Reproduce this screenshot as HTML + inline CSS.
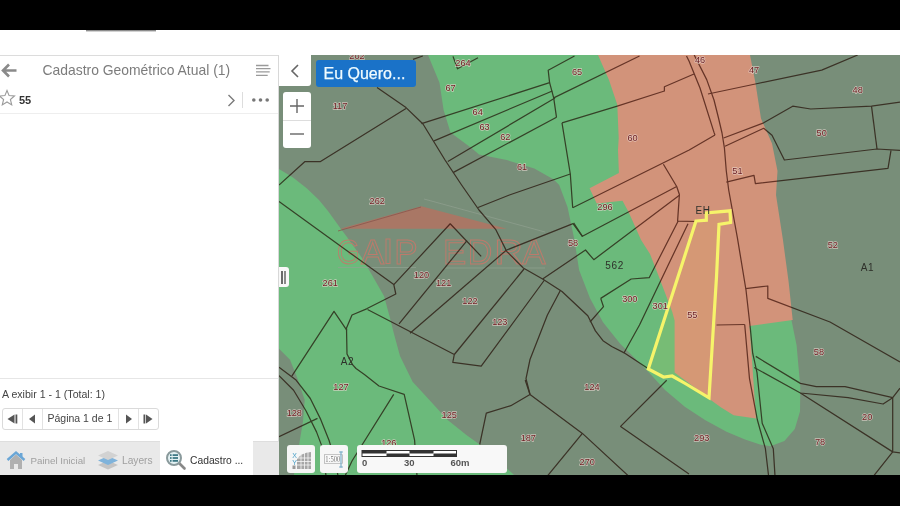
<!DOCTYPE html>
<html><head><meta charset="utf-8">
<style>
*{box-sizing:border-box;margin:0;padding:0}
html,body{width:900px;height:506px;overflow:hidden;background:#000;font-family:"Liberation Sans",sans-serif}
.abs{position:absolute}
#top{left:0;top:0;width:900px;height:30px;background:#000}
#bot{left:0;top:475px;width:900px;height:31px;background:#000}
#white{left:0;top:30px;width:900px;height:445px;background:#fff}
#panel{left:0;top:55px;width:279px;height:420px;background:#fff;border-top:1px solid #dcdcdc;border-right:1px solid #d8d8d8}
#map{left:279px;top:55px;width:621px;height:420px;overflow:hidden}
.btn{background:#fff;border-radius:3px}
</style></head><body>
<div id="top" class="abs"></div>
<div id="white" class="abs"></div>
<div class="abs" style="left:86px;top:30px;width:70px;height:2px;background:linear-gradient(#6a6a6a,#f4f4f4)"></div>
<div id="panel" class="abs"></div>
<!-- header -->
<svg class="abs" style="left:1px;top:63px" width="16" height="15" viewBox="0 0 16 15"><path d="M8 1.5 L2 7.5 L8 13.5 M2.5 7.5 H15.5" fill="none" stroke="#8a8a8a" stroke-width="2.6"/></svg>
<div class="abs" style="left:42.5px;top:62px;font-size:13.9px;color:#7c7c7c;white-space:nowrap">Cadastro Geométrico Atual (1)</div>
<svg class="abs" style="left:255px;top:64px" width="17" height="13" viewBox="0 0 17 13"><g stroke="#9a9a9a" stroke-width="1.3"><path d="M1 1.5H13.5M1 4.7H15.5M1 7.9H14.7M1 11.3H12.7"/></g></svg>
<div class="abs" style="left:0;top:113px;width:278px;height:1px;background:#eee"></div>
<svg class="abs" style="left:-2px;top:89px" width="18" height="18" viewBox="0 0 18 18"><path d="M9 1.5 L11.1 6.6 L16.5 7 L12.4 10.5 L13.7 15.9 L9 13 L4.3 15.9 L5.6 10.5 L1.5 7 L6.9 6.6 Z" fill="none" stroke="#9a9a9a" stroke-width="1.1"/></svg>
<div class="abs" style="left:19px;top:94px;font-size:11px;font-weight:bold;color:#333">55</div>
<svg class="abs" style="left:226px;top:93px" width="10" height="15" viewBox="0 0 10 15"><path d="M2.5 2 L8 7.5 L2.5 13" fill="none" stroke="#7a7a7a" stroke-width="1.4"/></svg>
<div class="abs" style="left:241.5px;top:92px;width:1px;height:16px;background:#ddd"></div>
<svg class="abs" style="left:251px;top:97px" width="19" height="6" viewBox="0 0 19 6"><g fill="#777"><circle cx="2.8" cy="3" r="1.8"/><circle cx="9.5" cy="3" r="1.8"/><circle cx="16.2" cy="3" r="1.8"/></g></svg>
<!-- footer -->
<div class="abs" style="left:0;top:378px;width:278px;height:1px;background:#e6e6e6"></div>
<div class="abs" style="left:2px;top:388px;font-size:10.6px;color:#444;white-space:nowrap">A exibir 1 - 1 (Total: 1)</div>
<div class="abs" style="left:2px;top:408px;width:157px;height:22px;border:1px solid #dadada;border-radius:3px;background:#fff"></div>
<div class="abs" style="left:22px;top:409px;width:1px;height:20px;background:#e2e2e2"></div>
<div class="abs" style="left:42px;top:409px;width:1px;height:20px;background:#e2e2e2"></div>
<div class="abs" style="left:118px;top:409px;width:1px;height:20px;background:#e2e2e2"></div>
<div class="abs" style="left:138px;top:409px;width:1px;height:20px;background:#e2e2e2"></div>
<svg class="abs" style="left:0;top:408px" width="160" height="22" viewBox="0 0 160 22"><g fill="#555">
<path d="M7.5 11 L14.5 6.5 V15.5 Z"/><rect x="15.5" y="6.5" width="1.8" height="9"/>
<path d="M29 11 L35 6.5 V15.5 Z"/>
<path d="M132 11 L126 6.5 V15.5 Z"/>
<rect x="143.5" y="6.5" width="1.8" height="9"/><path d="M152.5 11 L146 6.5 V15.5 Z"/>
</g></svg>
<div class="abs" style="left:47.5px;top:412px;font-size:10.5px;color:#444;white-space:nowrap">Página 1 de 1</div>
<!-- tabs -->
<div class="abs" style="left:0;top:441px;width:279px;height:34px;background:#e9e9e9;border-top:1px solid #dedede"></div>
<div class="abs" style="left:160px;top:441px;width:93px;height:34px;background:#fff"></div>
<svg class="abs" style="left:6px;top:450px" width="20" height="20" viewBox="0 0 20 20">
<path d="M4 10 V19 H8 V14 H12 V19 H16 V10 L10 4.5 Z" fill="#b0b0b0"/>
<path d="M1.5 10 L10 2.5 L18.5 10" fill="none" stroke="#6aa6d6" stroke-width="2.4"/><rect x="14" y="3" width="2.5" height="4" fill="#6aa6d6"/></svg>
<div class="abs" style="left:30.5px;top:455px;font-size:9.75px;color:#a0a0a0;white-space:nowrap">Painel Inicial</div>
<svg class="abs" style="left:97px;top:450px" width="22" height="20" viewBox="0 0 22 20">
<path d="M11 10.5 L21 15 L11 19.5 L1 15 Z" fill="#c4c4c4"/>
<path d="M11 6 L21 10.5 L11 15 L1 10.5 Z" fill="#7fb3db"/>
<path d="M11 1 L21 5.5 L11 10 L1 5.5 Z" fill="#d2d2d2"/></svg>
<div class="abs" style="left:122px;top:455px;font-size:10.2px;color:#a0a0a0;white-space:nowrap">Layers</div>
<svg class="abs" style="left:165px;top:449px" width="22" height="22" viewBox="0 0 22 22">
<line x1="13.5" y1="13.5" x2="19.5" y2="19.5" stroke="#888" stroke-width="2.6" stroke-linecap="round"/>
<circle cx="9" cy="9" r="7" fill="#e4f2f4" stroke="#8a9a9c" stroke-width="2"/>
<g fill="#2b6b78"><rect x="5" y="5.3" width="1.6" height="1.6"/><rect x="7.6" y="5.3" width="5.4" height="1.6"/><rect x="5" y="8.2" width="1.6" height="1.6"/><rect x="7.6" y="8.2" width="5.4" height="1.6"/><rect x="5" y="11.1" width="1.6" height="1.6"/><rect x="7.6" y="11.1" width="5.4" height="1.6"/></g></svg>
<div class="abs" style="left:190px;top:455px;font-size:10.3px;color:#333;white-space:nowrap">Cadastro ...</div>
<div id="map" class="abs"><svg width="621" height="421" viewBox="279 55 621 421">
<rect x="279" y="55" width="621" height="421" fill="#788e79"/>
<polygon points="279,169 293,177.5 307,188.5 319,200 328,211 341,229 347,237 362,258 372,275 384,296 390,318 394,334 400,356 412.6,381.8 428.5,399 447.4,419.8 466.4,435 479.7,444.5 512,473 515,476 279,476" fill="#6bba7b"/>
<polygon points="279,348.7 290,359.7 297.3,378 304.7,400 302.9,422 299.2,444 293.7,476 279,476" fill="#788e79"/>
<polygon points="428,55 439.5,82.7 443.6,110 450.5,132.5 472.7,149 479,154.6 506.7,160 534.3,168.4 553.7,179.5 559.2,185 567.5,207 574.5,240.3 579.1,270 590,298.3 603,322.2 620.4,343.9 635.7,359.1 648.7,372.2 665,390 684.8,406.7 705,420 726.5,431.7 745,439.5 760,444.5 770.4,446.3 784.4,441 794.8,428.9 800,411.5 800.3,387 796.6,345.3 791.3,319.2 770,200 700,55" fill="#6bba7b"/>
<polygon points="598,55 750,55 755.4,82.7 761,118.6 772,143.5 777.5,171 776,195 783,240.3 788.6,281.8 792.7,320 749.5,326 752,360 756,418.4 733.6,415.3 720.8,407.3 709.7,399.3 698,390 674.6,372.6 674.6,320.4 672.2,311.7 659,277 650,254 641.1,240 628.7,212.2 622.5,200.7 596.7,203.4 589.6,188.2 618.9,173.1 618,150 618.7,138 617.3,104.8 609,80" fill="#d2937a"/>
<polygon points="696,221 706.3,220.2 706.3,213 730,210.8 730.6,222.5 719,224.3 716.5,277 713.5,324.8 709,397.8 685.2,383.5 672.2,376 663.5,377 648.3,369" fill="#f0d040" fill-opacity="0.09"/>
<g opacity="0.9">
<polygon points="340,228.8 421.3,206.2 506.7,228.8" fill="#b8705f" fill-opacity="0.85"/>
<polyline points="338,231 421,207" fill="none" stroke="#8a5048" stroke-width="0.8"/>
<polyline points="424,199 545,232" fill="none" stroke="#8fa08f" stroke-width="0.8"/>
<line x1="338" y1="267.5" x2="416" y2="267.5" stroke="#90a290" stroke-width="0.8"/>
<line x1="444" y1="268" x2="545" y2="268" stroke="#90a290" stroke-width="0.8"/>
<text x="337" y="263.5" font-family="Liberation Sans" font-size="35" textLength="22.69999999999999" lengthAdjust="spacingAndGlyphs" fill="none" stroke="#c4786a" stroke-width="1">G</text>
<text x="361" y="263.5" font-family="Liberation Sans" font-size="35" textLength="23.30000000000001" lengthAdjust="spacingAndGlyphs" fill="none" stroke="#c4786a" stroke-width="1">A</text>
<rect x="386" y="239" width="4" height="24.5" fill="none" stroke="#c4786a" stroke-width="1"/>
<text x="394.3" y="263.5" font-family="Liberation Sans" font-size="35" textLength="23.399999999999977" lengthAdjust="spacingAndGlyphs" fill="none" stroke="#c4786a" stroke-width="1">P</text>
<text x="443" y="263.5" font-family="Liberation Sans" font-size="35" textLength="23.30000000000001" lengthAdjust="spacingAndGlyphs" fill="none" stroke="#c4786a" stroke-width="1">E</text>
<text x="467.7" y="263.5" font-family="Liberation Sans" font-size="35" textLength="24.600000000000023" lengthAdjust="spacingAndGlyphs" fill="none" stroke="#c4786a" stroke-width="1">D</text>
<text x="494.3" y="263.5" font-family="Liberation Sans" font-size="35" textLength="28.69999999999999" lengthAdjust="spacingAndGlyphs" fill="none" stroke="#c4786a" stroke-width="1">R</text>
<text x="522.3" y="263.5" font-family="Liberation Sans" font-size="35" textLength="23.40000000000009" lengthAdjust="spacingAndGlyphs" fill="none" stroke="#c4786a" stroke-width="1">A</text>
</g>
<g fill="none" stroke="#7c5a50" stroke-width="1.25" stroke-linejoin="round" style="mix-blend-mode:multiply">
<polyline points="377,87.6 406,107.6 423,124 445,160 461.6,185 479,210 495.6,229.3 506.7,251.4 523.3,268 542.6,279 562,291.5 587.8,315.7 591.1,322.2 595.4,330.9 603,340.7 611.7,346.5 623.7,352.6 648,368.5"/>
<polyline points="279,185 305,161.5 320.5,161.5 406,108.5"/>
<polyline points="413,59.4 422.8,56"/>
<polyline points="421.5,123.6 549.6,82.7"/>
<polyline points="434,140.8 552.3,91"/>
<polyline points="447.8,161.5 555,98"/>
<polyline points="453,172.6 556.5,117.3"/>
<polyline points="574.5,56 548.2,70.2 549.6,82.7 553.7,97.9 556.5,117.3"/>
<polyline points="553.7,97.9 639.5,56"/>
<polyline points="562,122.8 617.3,106.2 664.4,91 664.4,86.8 694,74"/>
<polyline points="562,122.8 570.3,174 572.7,207.8"/>
<polyline points="572.7,207.8 689.2,150 715,135"/>
<polyline points="478,207.5 509.4,195 570.3,174"/>
<polyline points="663.4,164.2 676.7,186.5 679.4,194.5 677.6,221.1 697,221.5"/>
<polyline points="506.7,250 573,223.7 582.4,236.3 676.7,186.5"/>
<polyline points="573.6,222.9 582.4,236.3"/>
<polyline points="542.6,279 585.5,250 593.8,259.7 679.4,195.3"/>
<polyline points="600.7,298.4 631.2,279 649.2,277.7 678.2,221"/>
<polyline points="600.7,298.4 603.5,306.7 590,322"/>
<polyline points="688,223.7 639.5,325 623.8,353.2"/>
<polyline points="686.5,56 689,61 700,88 714,132.4 715,135"/>
<polyline points="694.2,55 706.7,79.6 714,100 718.5,118 722,133 724.4,147.8 726.3,171 728.7,190 737.4,237.8 746,290 750.4,329 752.7,353.2 757,372.6 762.2,423.2 773.3,448.7 775,476"/>
<polyline points="744.7,324.5 749.5,378.7 757.4,420 765.4,448.7 768.6,476"/>
<polyline points="708,94 755.4,84 821.7,70.2 857.7,55"/>
<polyline points="723.6,138 763.7,122.8 792.7,106.2 810.7,109 871.5,106.2 900,102"/>
<polyline points="725,146.3 763.7,128.3 772,135.2 784.4,160 877,149 900,150.4"/>
<polyline points="871.5,106.2 877,149"/>
<polyline points="891,150.4 888,168.4 755.4,183.6 754,175.3 726.3,182.2"/>
<polyline points="745.7,288.7 767.8,286 767.8,298.4 830,322 900,362"/>
<polyline points="716.5,325 744.7,324.5"/>
<polyline points="755.8,356.4 800.4,383.4 816.3,386.6 845,386.6 892.7,397.7 900,388.2"/>
<polyline points="754.2,367.5 800.4,393 848.1,397.7 883.1,404 892.7,397.7"/>
<polyline points="800.4,393 892.7,451.9 900,453"/>
<polyline points="892.7,397.7 892.7,451.9 873.6,476"/>
<polyline points="279,201.6 393.8,284.6 395.8,294 366.6,308.8 352,315 346.5,328 347,354 352.5,364.6 356,368.5 364.4,374.6 379,386 404.2,394.3 414.6,440.2 417,476"/>
<polyline points="393.8,284.6 450.2,223.8 481.2,256.4"/>
<polyline points="399,323.8 467,240.6"/>
<polyline points="410,333.3 506.5,250"/>
<polyline points="367.5,309.5 454.3,354.5 452.8,362.4 481.2,366.2 544.5,280"/>
<polyline points="454.3,354.5 524,269"/>
<polyline points="291.8,376.2 334,311.3 346.9,330.4"/>
<polyline points="393.7,394.3 352,461 345,476"/>
<polyline points="279,367.2 295.7,379.7 310.3,398.5 320.7,419.4 329,440.3 335.3,461 338,476"/>
<polyline points="279,375.6 293.6,390.2 306.1,411 316.5,431.9 322.8,448.6 326,476"/>
<polyline points="279,436.8 317.5,418.4"/>
<polyline points="560.6,290 547.4,315 530,359.5 526,378.6 530,394.5 582.4,433.4 628.5,476"/>
<polyline points="530,394.5 525.2,380"/>
<polyline points="530,394.5 510.8,405.7 486.3,413.2 479.7,444.5"/>
<polyline points="582.4,433.4 547.4,476"/>
<polyline points="666.7,380.2 620.6,426.4 689,474"/>
<polyline points="453,56.4 457.5,68.8 478,57.8"/>
</g>
<polygon points="696,221 706.3,220.2 706.3,213 730,210.8 730.6,222.5 719,224.3 716.5,277 713.5,324.8 709,397.8 685.2,383.5 672.2,376 663.5,377 648.3,369" fill="none" stroke="#f6f46a" stroke-width="3.2" stroke-linejoin="miter"/>
<g font-family="Liberation Sans" font-size="9.2" text-anchor="middle" fill="#6e2024" stroke="#ecdcd4" stroke-width="1.3" paint-order="stroke" stroke-opacity="0.7">
<text x="357" y="59.0">202</text>
<text x="340" y="109.3">117</text>
<text x="463" y="66.3">264</text>
<text x="450.5" y="90.89999999999999">67</text>
<text x="477.7" y="115.0">64</text>
<text x="484.5" y="129.70000000000002">63</text>
<text x="505.3" y="139.9">62</text>
<text x="577" y="74.89999999999999">65</text>
<text x="632.6" y="140.8">60</text>
<text x="522" y="170.3">61</text>
<text x="754" y="72.7">47</text>
<text x="857.7" y="92.89999999999999">48</text>
<text x="821.7" y="135.70000000000002">50</text>
<text x="737.4" y="173.9">51</text>
<text x="700" y="63.3">46</text>
<text x="377.2" y="203.5">262</text>
<text x="330.2" y="285.7">261</text>
<text x="421.5" y="278.3">120</text>
<text x="443.6" y="285.7">121</text>
<text x="470" y="304.0">122</text>
<text x="605" y="210.3">296</text>
<text x="573" y="246.3">58</text>
<text x="629.8" y="301.7">300</text>
<text x="660.2" y="308.7">301</text>
<text x="499.8" y="325.3">123</text>
<text x="832.8" y="247.8">52</text>
<text x="692.3" y="318.3">55</text>
<text x="341" y="389.90000000000003">127</text>
<text x="294.3" y="416.0">128</text>
<text x="449.2" y="417.90000000000003">125</text>
<text x="388.8" y="445.6">126</text>
<text x="592" y="389.90000000000003">124</text>
<text x="528.3" y="440.8">187</text>
<text x="587.2" y="465.3">270</text>
<text x="818.9" y="354.90000000000003">58</text>
<text x="867.2" y="420.1">20</text>
<text x="701.7" y="440.8">293</text>
<text x="820" y="444.7">78</text>
</g>
<g font-family="Liberation Sans" font-size="10" text-anchor="middle" fill="#2e302a" letter-spacing="0.6">
<text x="614.6" y="268.9">562</text>
<text x="867.4" y="271.09999999999997">A1</text>
<text x="703" y="213.89999999999998">EH</text>
<text x="347.4" y="364.7">A2</text>
</g></svg></div>
<!-- map controls -->
<div class="abs" style="left:279px;top:55px;width:32px;height:31px;background:#fff;border-radius:0 0 3px 0"></div>
<svg class="abs" style="left:288px;top:63px" width="14" height="16" viewBox="0 0 14 16"><path d="M10 2 L4 8 L10 14" fill="none" stroke="#666" stroke-width="1.6"/></svg>
<div class="abs" style="left:316px;top:60px;width:100px;height:27px;background:#1a72c8;border-radius:3px"></div>
<div class="abs" style="left:323.5px;top:64.5px;font-size:16px;color:#f0fbff;-webkit-text-stroke:0.25px #f0fbff;white-space:nowrap">Eu Quero...</div>
<div class="abs" style="left:283px;top:92px;width:28px;height:56px;background:#fff;border-radius:3px"></div>
<div class="abs" style="left:283px;top:120px;width:28px;height:1px;background:#ddd"></div>
<svg class="abs" style="left:283px;top:92px" width="28" height="56" viewBox="0 0 28 56"><g stroke="#666" stroke-width="1.4"><path d="M7 14 H21 M14 7 V21"/><path d="M7 42 H21"/></g></svg>
<div class="abs" style="left:279px;top:267px;width:10px;height:20px;background:#f8f8f8;border-radius:0 3px 3px 0"></div>
<div class="abs" style="left:281px;top:271px;width:1.6px;height:13px;background:#6a6a6a"></div><div class="abs" style="left:283.6px;top:271px;width:2.2px;height:13px;background:#8a8a8a"></div>
<div class="abs btn" style="left:287px;top:445px;width:28px;height:28px;background:#f6f6f6"></div>
<svg class="abs" style="left:291px;top:449px" width="22" height="22" viewBox="0 0 22 22">
<path d="M6 20 V10 Q10 4 20 3 V20 Z" fill="#a6a6a6"/>
<g stroke="#f6f6f6" stroke-width="0.8"><path d="M6 9H20M6 12.5H20M6 16H20M10 4V20M13.5 3V20M17 3V20"/></g>
<text x="3.5" y="9" font-family="Liberation Sans" font-size="7" fill="#4aa0c8" text-anchor="middle">X</text>
<text x="3.5" y="16" font-family="Liberation Sans" font-size="7" fill="#4aa0c8" text-anchor="middle">Y</text>
<rect x="1.5" y="16.5" width="3" height="3.5" fill="#999"/></svg>
<div class="abs btn" style="left:320px;top:445px;width:28px;height:28px;background:#f6f6f6"></div>
<svg class="abs" style="left:320px;top:445px" width="28" height="28" viewBox="0 0 28 28">
<rect x="4.5" y="9.7" width="18" height="8.6" fill="#fafafa" stroke="#aaa" stroke-width="0.7"/>
<text x="12.8" y="16.8" font-family="Liberation Serif" font-size="8.2" fill="#777" text-anchor="middle" textLength="15" lengthAdjust="spacingAndGlyphs">1:500</text>
<path d="M19.3 7 H22.7 M21 7 V22 M19.3 22 H22.7" stroke="#86b4cc" stroke-width="1.3" fill="none"/></svg>
<div class="abs btn" style="left:357px;top:445px;width:150px;height:28px;background:#f8f8f8"></div>
<svg class="abs" style="left:357px;top:445px" width="150" height="28" viewBox="0 0 150 28">
<rect x="5" y="5.5" width="94.5" height="6" fill="#fff" stroke="#333" stroke-width="1"/>
<rect x="5" y="5.5" width="24.5" height="3" fill="#333"/><rect x="29.5" y="8.5" width="23" height="3" fill="#333"/>
<rect x="52.5" y="5.5" width="24" height="3" fill="#333"/><rect x="76.5" y="8.5" width="23" height="3" fill="#333"/>
<g font-family="Liberation Sans" font-size="9.5" font-weight="bold" fill="#555"><text x="5" y="21">0</text><text x="47" y="21">30</text><text x="93.5" y="21">60m</text></g></svg>
<div id="bot" class="abs"></div></body></html>
